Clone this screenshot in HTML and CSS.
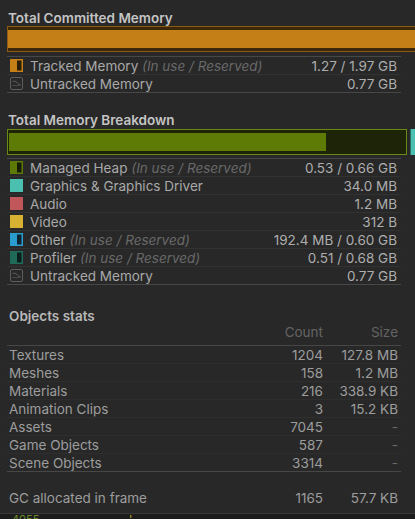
FILE: index.html
```html
<!DOCTYPE html>
<html>
<head>
<meta charset="utf-8">
<link rel="stylesheet" href="styles.css">
</head>
<body>
<div class="panel">
  <section class="group">
    <div class="title">Total Committed Memory</div>
    <div class="bar bar-orange"><div class="fill" style="width:100%"></div></div>
    <div class="list list-top">
      <div class="row">
        <svg class="ico" viewBox="0 0 13 13"><rect x="0" y="0" width="13" height="13" fill="#c47f17"/><rect x="7" y="1.5" width="4.5" height="10" fill="#2a1d0a"/></svg>
        <span class="lbl">Tracked Memory <em>(In use / Reserved)</em></span>
        <span class="val">1.27 / 1.97 GB</span>
      </div>
      <div class="row last">
        <svg class="ico" viewBox="0 0 13 13"><rect x="0.5" y="0.5" width="12" height="12" rx="1.5" fill="none" stroke="#5e5e5e"/><path d="M2.5 4.5 Q5 3 7 5.5 T10.5 7.5" fill="none" stroke="#5e5e5e" stroke-width="1"/><path d="M2.5 8.5 L10.5 8.5" stroke="#4a4a4a" stroke-width="1"/></svg>
        <span class="lbl">Untracked Memory</span>
        <span class="val">0.77 GB</span>
      </div>
    </div>
  </section>

  <section class="group g2">
    <div class="title">Total Memory Breakdown</div>
    <div class="bar-wrap">
      <div class="bar bar-green"><div class="fill" style="width:80%"></div></div>
      <div class="bar-teal"></div>
    </div>
    <div class="list list-top">
      <div class="row">
        <svg class="ico" viewBox="0 0 13 13"><rect x="0" y="0" width="13" height="13" fill="#5d7a06"/><rect x="7" y="1.5" width="4.5" height="10" fill="#161c05"/></svg>
        <span class="lbl">Managed Heap <em>(In use / Reserved)</em></span>
        <span class="val">0.53 / 0.66 GB</span>
      </div>
      <div class="row">
        <span class="sw" style="background:#4cc0b0"></span>
        <span class="lbl">Graphics &amp; Graphics Driver</span>
        <span class="val">34.0 MB</span>
      </div>
      <div class="row">
        <span class="sw" style="background:#c1565b"></span>
        <span class="lbl">Audio</span>
        <span class="val">1.2 MB</span>
      </div>
      <div class="row">
        <span class="sw" style="background:#d6b132"></span>
        <span class="lbl">Video</span>
        <span class="val">312 B</span>
      </div>
      <div class="row">
        <svg class="ico" viewBox="0 0 13 13"><rect x="0" y="0" width="13" height="13" fill="#2a9ccd"/><rect x="7" y="1.5" width="4.5" height="10" fill="#0c2330"/></svg>
        <span class="lbl">Other <em>(In use / Reserved)</em></span>
        <span class="val">192.4 MB / 0.60 GB</span>
      </div>
      <div class="row">
        <svg class="ico" viewBox="0 0 13 13"><rect x="0" y="0" width="13" height="13" fill="#1f6a58"/><rect x="7" y="1.5" width="4.5" height="10" fill="#0b1f1a"/></svg>
        <span class="lbl">Profiler <em>(In use / Reserved)</em></span>
        <span class="val">0.51 / 0.68 GB</span>
      </div>
      <div class="row last">
        <svg class="ico" viewBox="0 0 13 13"><rect x="0.5" y="0.5" width="12" height="12" rx="1.5" fill="none" stroke="#5e5e5e"/><path d="M2.5 4.5 Q5 3 7 5.5 T10.5 7.5" fill="none" stroke="#5e5e5e" stroke-width="1"/><path d="M2.5 8.5 L10.5 8.5" stroke="#4a4a4a" stroke-width="1"/></svg>
        <span class="lbl">Untracked Memory</span>
        <span class="val">0.77 GB</span>
      </div>
    </div>
  </section>

  <section class="group g3">
    <div class="title t3">Objects stats</div>
    <div class="orow head">
      <span class="oname"></span>
      <span class="ocount">Count</span>
      <span class="osize">Size</span>
    </div>
    <div class="olist">
      <div class="orow"><span class="oname">Textures</span><span class="ocount">1204</span><span class="osize">127.8 MB</span></div>
      <div class="orow"><span class="oname">Meshes</span><span class="ocount">158</span><span class="osize">1.2 MB</span></div>
      <div class="orow"><span class="oname">Materials</span><span class="ocount">216</span><span class="osize">338.9 KB</span></div>
      <div class="orow"><span class="oname">Animation Clips</span><span class="ocount">3</span><span class="osize">15.2 KB</span></div>
      <div class="orow"><span class="oname">Assets</span><span class="ocount">7045</span><span class="osize dash">-</span></div>
      <div class="orow"><span class="oname">Game Objects</span><span class="ocount">587</span><span class="osize dash">-</span></div>
      <div class="orow last"><span class="oname">Scene Objects</span><span class="ocount">3314</span><span class="osize dash">-</span></div>
    </div>
    <div class="orow gc"><span class="oname">GC allocated in frame</span><span class="ocount">1165</span><span class="osize">57.7 KB</span></div>
  </section>
</div>
<div class="footer"><span class="f1">4055</span><span class="f2">-- -- - -</span><span class="f3">'</span></div>
</body>
</html>
```

FILE: styles.css
```css
html, body {
  margin: 0;
  padding: 0;
  background: #282828;
  height: 519px;
  overflow: hidden;
}
body {
  font-family: Inter, "Noto Sans", sans-serif;
  font-size: 13.5px;
  color: #a9a9a9;
  display: flex;
  flex-direction: column;
}
.panel {
  flex: 1;
  padding: 10px 14px 0 7px;
  overflow: hidden;
}
.group { display: flex; flex-direction: column; }
.title {
  font-weight: 600;
  color: #c4c4c4;
  height: 16px;
  line-height: 17px;
  padding-left: 1px;
}
.bar {
  position: relative;
  height: 26px;
  box-sizing: border-box;
}
.bar-orange {
  margin-right: -14px;
  background: #c47f17;
  border: 1px solid #8c5c16;
  border-right: none;
}
.bar-orange .fill {
  height: 100%;
  box-sizing: border-box;
  border-top: 3px solid #3c2708;
  border-bottom: 3px solid #3c2708;
  background: #c47f17;
}
.list-top { margin-top: 4px; border-top: 1px solid #474747; }
.row {
  display: flex;
  align-items: center;
  height: 17px;
  border-bottom: 1px solid #323232;
  padding: 0 4px 0 3px;
}
.row.last { border-bottom: 1px solid #474747; }
.ico, .sw {
  width: 13px;
  height: 13px;
  flex: none;
  margin-right: 7px;
  display: block;
}
.lbl { flex: 1; white-space: nowrap; }
.lbl em { color: #686868; }
.val { color: #aeaeae; white-space: nowrap; }

.g2 { margin-top: 19px; }
.bar-wrap {
  display: flex;
  margin-top: 1px;
  margin-right: -14px;
  gap: 3px;
}
.bar-green {
  width: 400px;
  flex: none;
  background: #1d2407;
  border: 1px solid #6a8a14;
  padding: 3px 1px;
}
.bar-green .fill {
  height: 100%;
  background: #5e7b06;
}
.bar-teal {
  flex: 1;
  height: 26px;
  background: #4cc0b0;
  border-left: 1px solid #2b6d63;
}
.g2 .list-top { margin-top: 3px; }

.g3 { margin-top: 23px; }
.t3 { padding-left: 2px; color: #b8b8b8; }
.orow {
  display: flex;
  align-items: center;
  height: 17px;
  padding: 0 3px 0 2px;
  border-bottom: 1px solid #2e2e2e;
  color: #9d9d9d;
}
.orow.head {
  height: 21px;
  align-items: flex-start;
  line-height: 17px;
  color: #646464;
  border-bottom: 1px solid #474747;
}
.orow.last { border-bottom: 1px solid #474747; }
.oname { flex: 1; white-space: nowrap; }
.ocount { width: 60px; text-align: right; }
.osize { width: 75px; text-align: right; }
.dash { color: #6a6a6a; }
.orow.gc { margin-top: 17px; border-bottom: none; }

.footer {
  height: 5px;
  flex: none;
  background: #1c1c1c;
  border-top: 1px solid #3a3a3a;
  overflow: hidden;
  font-size: 11px;
  line-height: 11px;
  white-space: nowrap;
  padding-left: 12px;
}
.f1 { color: #6c8a2a; }
.f2 { color: #6c8a2a; margin-left: 30px; }
.f3 { color: #c8b030; margin-left: 20px; }
```
